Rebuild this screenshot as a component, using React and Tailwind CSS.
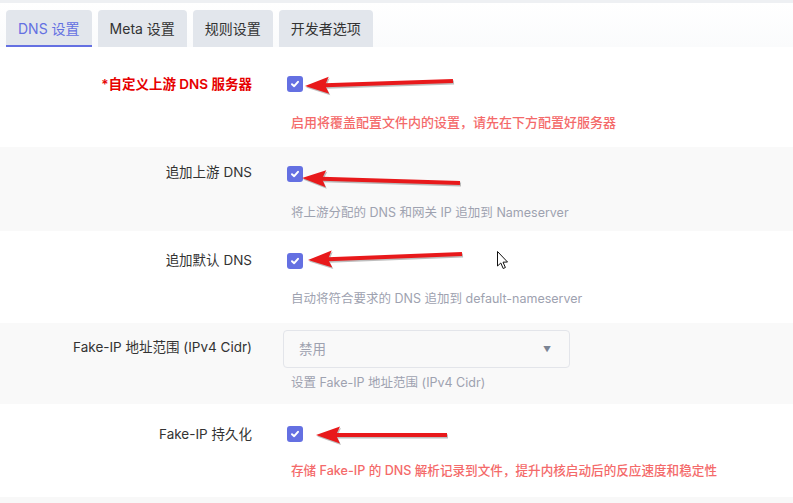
import React from 'react';

const font = { fontFamily: 'Inter, "Noto Sans CJK SC", sans-serif' };

const tabs = ['DNS 设置', 'Meta 设置', '规则设置', '开发者选项'];

// red annotation arrows drawn over the page: [tailX, tailY, tipX, tipY]
const arrows = [
  [453, 81, 305, 86],
  [460, 183, 302, 178],
  [462, 254, 308, 260],
  [447, 435, 316, 435],
];

function Arrow({ a }) {
  const [x1, y1, x2, y2] = a;
  const dx = x2 - x1;
  const dy = y2 - y1;
  const len = Math.hypot(dx, dy);
  const ux = dx / len;
  const uy = dy / len;
  const bx = x2 - ux * 24;
  const by = y2 - uy * 24;
  const nx = -uy;
  const ny = ux;
  const head = `${x2},${y2} ${bx + nx * 8.5},${by + ny * 8.5} ${bx + ux * 4},${by + uy * 4} ${bx - nx * 8.5},${by - ny * 8.5}`;
  return (
    <g>
      <g transform="translate(1,1.5)" opacity="0.25">
        <line x1={x1} y1={y1} x2={bx + ux * 4} y2={by + uy * 4} stroke="#000" strokeWidth="4" />
        <polygon points={head} fill="#000" />
      </g>
      <line x1={x1} y1={y1} x2={bx + ux * 4} y2={by + uy * 4} stroke="#e8191b" strokeWidth="4" />
      <polygon points={head} fill="#e8191b" />
    </g>
  );
}

function Check() {
  return (
    <div className="w-4 h-4 ml-1 rounded-[3px] bg-[#6470e2] flex items-center justify-center">
      <svg width="10" height="10" viewBox="0 0 10 10">
        <path d="M2 5.2 L4.2 7.2 L8 2.8" fill="none" stroke="#fff" strokeWidth="2" strokeLinecap="round" strokeLinejoin="round" />
      </svg>
    </div>
  );
}

function Row({ label, labelClass, desc, descClass, bg, h, pt, gap, labelTop, children }) {
  return (
    <div className={`flex ${bg} ${h}`}>
      <div className={`w-[252px] shrink-0 text-right ${pt}`}>
        <div className={`${labelTop} text-[13.5px] leading-[18px] ${labelClass}`}>{label}</div>
      </div>
      <div className={`pl-[31px] flex flex-col ${pt}`}>
        {children}
        <div className={`${gap} pl-[8px] leading-[18px] whitespace-nowrap ${descClass}`}>{desc}</div>
      </div>
    </div>
  );
}

export default function App() {
  return (
    <div className="w-[793px] h-[503px] relative bg-white overflow-hidden" style={font}>
      <div className="h-[3px] bg-[#eef0f3]"></div>
      <div className="flex gap-[6px] px-[6px] pt-[7px] bg-gradient-to-b from-white to-[#fafbfc]">
        {tabs.map((t, i) => (
          <div
            key={t}
            className={`h-[37px] px-[12px] rounded-t-[4px] bg-[#e2e6ec] flex items-center text-[14px] ${i === 0 ? 'text-[#6470e2] border-b-2 border-[#6470e2] pt-[2px]' : 'text-[#333]'}`}
          >
            {t}
          </div>
        ))}
      </div>

      <Row
        label="*自定义上游 DNS 服务器"
        labelClass="text-[#e60000] font-semibold"
        labelTop="mt-[-1px]"
        desc="启用将覆盖配置文件内的设置，请先在下方配置好服务器"
        descClass="text-[13px] text-[#f46a6a] font-medium"
        bg="bg-white"
        h="h-[100px]"
        pt="pt-[29px]"
        gap="mt-[21px]"
      >
        <Check />
      </Row>
      <Row
        label="追加上游 DNS"
        labelClass="text-[#333]"
        labelTop="mt-[-3px]"
        desc="将上游分配的 DNS 和网关 IP 追加到 Nameserver"
        descClass="text-[12.5px] text-[#9ea2b0]"
        bg="bg-[#f9f9f9]"
        h="h-[84px]"
        pt="pt-[19px]"
        gap="mt-[22px]"
      >
        <Check />
      </Row>
      <Row
        label="追加默认 DNS"
        labelClass="text-[#333]"
        labelTop="mt-[-2px]"
        desc="自动将符合要求的 DNS 追加到 default-nameserver"
        descClass="text-[12.5px] text-[#9ea2b0]"
        bg="bg-white"
        h="h-[92px]"
        pt="pt-[22px]"
        gap="mt-[21px]"
      >
        <Check />
      </Row>
      <Row
        label="Fake-IP 地址范围 (IPv4 Cidr)"
        labelClass="text-[#333]"
        labelTop="mt-[8px]"
        desc="设置 Fake-IP 地址范围 (IPv4 Cidr)"
        descClass="text-[12.5px] text-[#9ea2b0]"
        bg="bg-[#f9f9f9]"
        h="h-[81px]"
        pt="pt-[7px]"
        gap="mt-[6px]"
      >
        <div className="w-[287px] h-[38px] border border-[#e3e5ea] rounded-[4px] bg-[#f9f9f9] flex items-center justify-between pl-[15px] pr-[18px]">
          <span className="text-[13.5px] text-[#9ea2b0]">禁用</span>
          <span className="text-[8px] text-[#7b8494]">▼</span>
        </div>
      </Row>
      <Row
        label="Fake-IP 持久化"
        labelClass="text-[#333]"
        labelTop="mt-[-1px]"
        desc="存储 Fake-IP 的 DNS 解析记录到文件，提升内核启动后的反应速度和稳定性"
        descClass="text-[12.6px] text-[#f46a6a] font-medium"
        bg="bg-white"
        h="h-[93px]"
        pt="pt-[22px]"
        gap="mt-[20px]"
      >
        <Check />
      </Row>
      <div className="h-[6px] bg-[#f8f8f8]"></div>

      <svg className="absolute inset-0 pointer-events-none" width="793" height="503">
        {arrows.map((a, i) => (
          <Arrow key={i} a={a} />
        ))}
        <path d="M497.5 251.5 L497.5 266 L500.8 263 L503.2 268.5 L505.4 267.5 L503 262.2 L507.5 262 Z" fill="#fff" stroke="#111" strokeWidth="1" strokeLinejoin="round" />
      </svg>
    </div>
  );
}
